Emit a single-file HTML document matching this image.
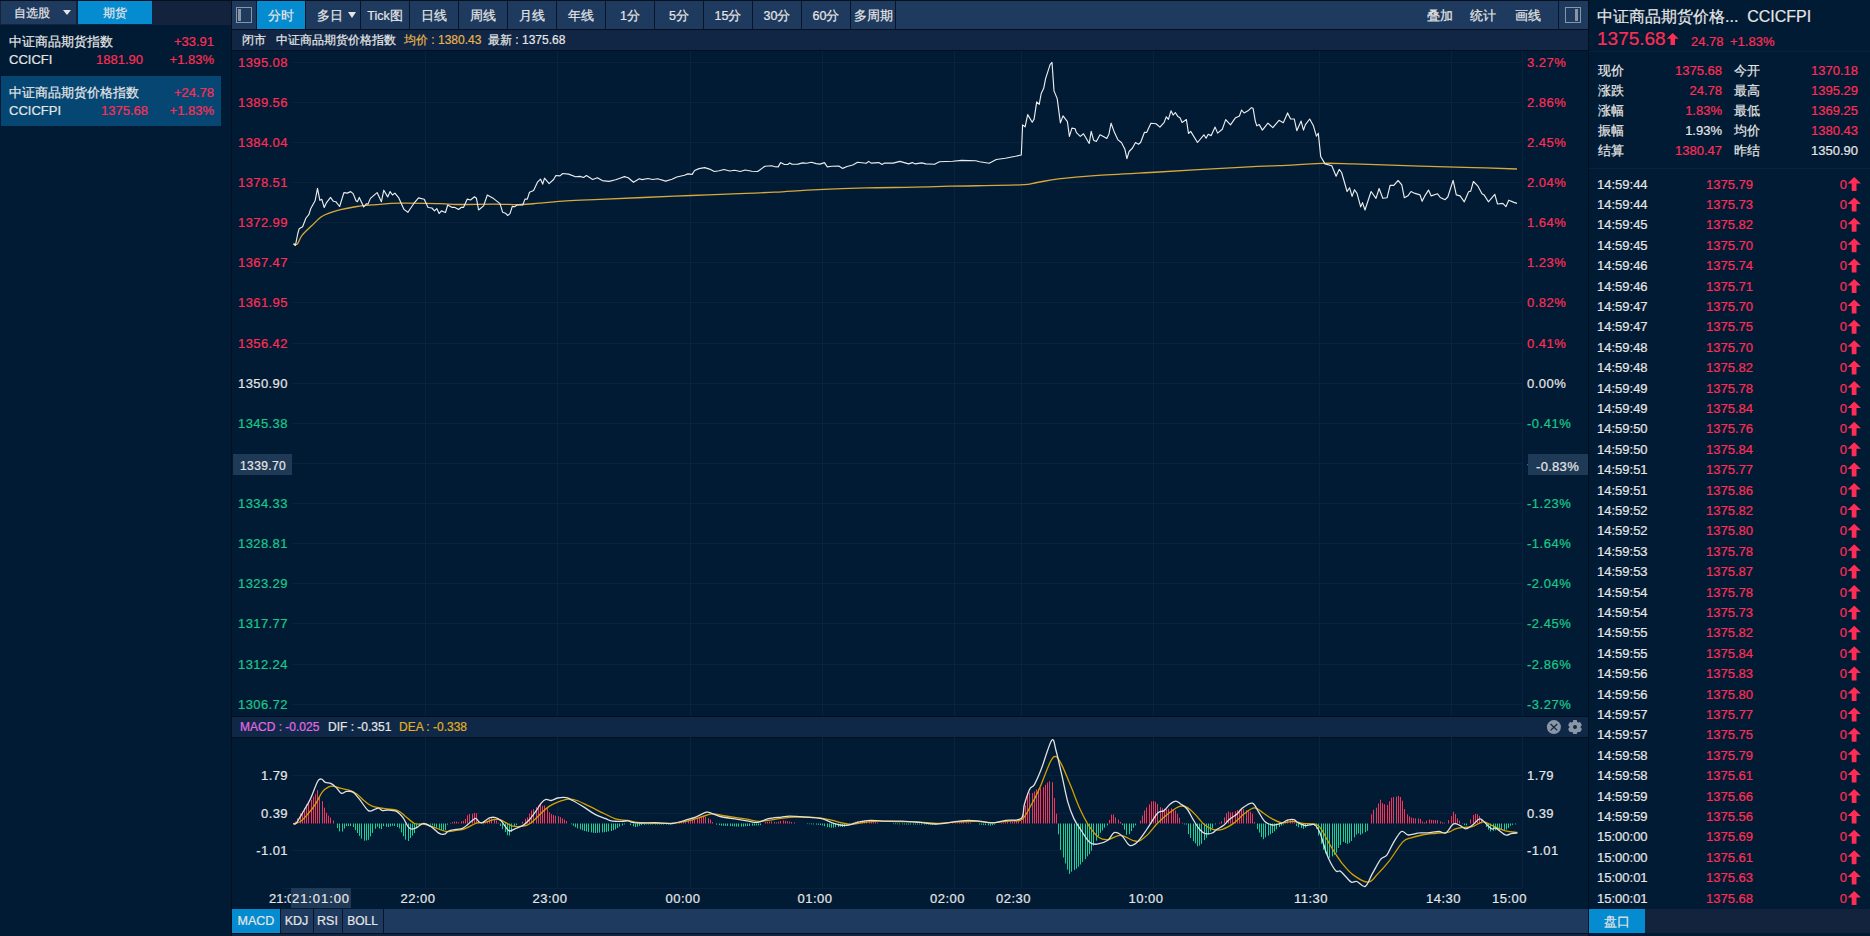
<!DOCTYPE html><html><head><meta charset="utf-8"><style>
*{margin:0;padding:0;box-sizing:border-box}
html,body{width:1870px;height:936px;overflow:hidden;background:#06101d;font-family:"Liberation Sans",sans-serif;color:#e6e6e6}
.a{position:absolute;white-space:nowrap;-webkit-text-stroke:0.2px currentColor}
.r{text-align:right}
.red{color:#ff2d55}.grn{color:#18c98a}.wht{color:#e6e6e6}
</style></head><body>
<div class="a" style="left:0px;top:1px;width:231px;height:24px;background:#13233d;"></div><div class="a" style="left:1px;top:1px;width:75px;height:23px;background:#1e3a5e;"></div><div class="a" style="left:78px;top:1px;width:74px;height:23px;background:#048bd0;"></div><div class="a" style="left:0px;top:25px;width:231px;height:911px;background:#011b34;"></div><div class="a" style="left:14px;top:6.0px;line-height:14px;font-size:12px;color:#e6e6e6;">自选股</div><div class="a" style="left:63px;top:10px;width:0;height:0;border-left:4px solid transparent;border-right:4px solid transparent;border-top:5px solid #e6e6e6"></div><div class="a" style="left:15px;width:200px;text-align:center;top:6.0px;line-height:14px;font-size:12px;color:#e6e6e6;">期货</div><div class="a" style="left:9px;top:33.5px;line-height:15px;font-size:13px;color:#e6e6e6;">中证商品期货指数</div><div class="a" style="right:1656px;top:33.5px;line-height:15px;font-size:13px;color:#ff2d55;">+33.91</div><div class="a" style="left:9px;top:51.5px;line-height:15px;font-size:13px;color:#e6e6e6;">CCICFI</div><div class="a" style="right:1727px;top:51.5px;line-height:15px;font-size:13px;color:#ff2d55;">1881.90</div><div class="a" style="right:1656px;top:51.5px;line-height:15px;font-size:13px;color:#ff2d55;">+1.83%</div><div class="a" style="left:1px;top:76px;width:220px;height:50px;background:#064673;"></div><div class="a" style="left:9px;top:84.5px;line-height:15px;font-size:13px;color:#e6e6e6;">中证商品期货价格指数</div><div class="a" style="right:1656px;top:84.5px;line-height:15px;font-size:13px;color:#ff2d55;">+24.78</div><div class="a" style="left:9px;top:102.5px;line-height:15px;font-size:13px;color:#e6e6e6;">CCICFPI</div><div class="a" style="right:1722px;top:102.5px;line-height:15px;font-size:13px;color:#ff2d55;">1375.68</div><div class="a" style="right:1656px;top:102.5px;line-height:15px;font-size:13px;color:#ff2d55;">+1.83%</div><div class="a" style="left:232px;top:1px;width:1356px;height:28px;background:#1e3a5e;"></div><div class="a" style="left:256px;top:1px;width:1px;height:28px;background:#07152a;"></div><div class="a" style="left:305px;top:1px;width:1px;height:28px;background:#07152a;"></div><div class="a" style="left:360px;top:1px;width:1px;height:28px;background:#07152a;"></div><div class="a" style="left:409px;top:1px;width:1px;height:28px;background:#07152a;"></div><div class="a" style="left:458px;top:1px;width:1px;height:28px;background:#07152a;"></div><div class="a" style="left:507px;top:1px;width:1px;height:28px;background:#07152a;"></div><div class="a" style="left:556px;top:1px;width:1px;height:28px;background:#07152a;"></div><div class="a" style="left:605px;top:1px;width:1px;height:28px;background:#07152a;"></div><div class="a" style="left:654px;top:1px;width:1px;height:28px;background:#07152a;"></div><div class="a" style="left:703px;top:1px;width:1px;height:28px;background:#07152a;"></div><div class="a" style="left:752px;top:1px;width:1px;height:28px;background:#07152a;"></div><div class="a" style="left:801px;top:1px;width:1px;height:28px;background:#07152a;"></div><div class="a" style="left:850px;top:1px;width:1px;height:28px;background:#07152a;"></div><div class="a" style="left:895px;top:1px;width:1px;height:28px;background:#07152a;"></div><div class="a" style="left:257px;top:1px;width:48px;height:28px;background:#048bd0;"></div><div class="a" style="left:181.0px;width:200px;text-align:center;top:8.7px;line-height:15px;font-size:12.5px;color:#e6e6e6;">分时</div><div class="a" style="left:230px;width:200px;text-align:center;top:8.7px;line-height:15px;font-size:12.5px;color:#e6e6e6;">多日</div><div class="a" style="left:348px;top:12px;width:0;height:0;border-left:4px solid transparent;border-right:4px solid transparent;border-top:6px solid #e6e6e6"></div><div class="a" style="left:285.0px;width:200px;text-align:center;top:8.7px;line-height:15px;font-size:12.5px;color:#e6e6e6;">Tick图</div><div class="a" style="left:334.0px;width:200px;text-align:center;top:8.7px;line-height:15px;font-size:12.5px;color:#e6e6e6;">日线</div><div class="a" style="left:383.0px;width:200px;text-align:center;top:8.7px;line-height:15px;font-size:12.5px;color:#e6e6e6;">周线</div><div class="a" style="left:432.0px;width:200px;text-align:center;top:8.7px;line-height:15px;font-size:12.5px;color:#e6e6e6;">月线</div><div class="a" style="left:481.0px;width:200px;text-align:center;top:8.7px;line-height:15px;font-size:12.5px;color:#e6e6e6;">年线</div><div class="a" style="left:530.0px;width:200px;text-align:center;top:8.7px;line-height:15px;font-size:12.5px;color:#e6e6e6;">1分</div><div class="a" style="left:579.0px;width:200px;text-align:center;top:8.7px;line-height:15px;font-size:12.5px;color:#e6e6e6;">5分</div><div class="a" style="left:628.0px;width:200px;text-align:center;top:8.7px;line-height:15px;font-size:12.5px;color:#e6e6e6;">15分</div><div class="a" style="left:677.0px;width:200px;text-align:center;top:8.7px;line-height:15px;font-size:12.5px;color:#e6e6e6;">30分</div><div class="a" style="left:726.0px;width:200px;text-align:center;top:8.7px;line-height:15px;font-size:12.5px;color:#e6e6e6;">60分</div><div class="a" style="left:773.0px;width:200px;text-align:center;top:8.7px;line-height:15px;font-size:12.5px;color:#e6e6e6;">多周期</div><div class="a" style="left:236px;top:7px;width:16px;height:16px;border:1px solid #8a96a3"></div><div class="a" style="left:238px;top:9px;width:3px;height:12px;background:#8a96a3"></div><div class="a" style="left:1340px;width:200px;text-align:center;top:8.7px;line-height:15px;font-size:12.5px;color:#e6e6e6;">叠加</div><div class="a" style="left:1383px;width:200px;text-align:center;top:8.7px;line-height:15px;font-size:12.5px;color:#e6e6e6;">统计</div><div class="a" style="left:1428px;width:200px;text-align:center;top:8.7px;line-height:15px;font-size:12.5px;color:#e6e6e6;">画线</div><div class="a" style="left:1558px;top:1px;width:1px;height:28px;background:#07152a;"></div><div class="a" style="left:1565px;top:7px;width:16px;height:16px;border:1px solid #8a96a3"></div><div class="a" style="left:1575px;top:9px;width:3px;height:12px;background:#8a96a3"></div><div class="a" style="left:232px;top:29px;width:1356px;height:1px;background:#06101d;"></div><div class="a" style="left:232px;top:30px;width:1356px;height:20px;background:#102644;"></div><div class="a" style="left:232px;top:50px;width:1356px;height:1px;background:#06101d;"></div><div class="a" style="left:242px;top:33.0px;line-height:14px;font-size:12px;color:#e6e6e6;">闭市</div><div class="a" style="left:276px;top:33.0px;line-height:14px;font-size:12px;color:#e6e6e6;">中证商品期货价格指数</div><div class="a" style="left:404px;top:33.0px;line-height:14px;font-size:12px;color:#e6b34d;">均价 : 1380.43</div><div class="a" style="left:488px;top:33.0px;line-height:14px;font-size:12px;color:#e6e6e6;">最新 : 1375.68</div><div class="a" style="left:232px;top:51px;width:1356px;height:666px;background:#011b34;"></div><div class="a" style="left:232px;top:716px;width:1356px;height:1px;background:#06101d;"></div><div class="a" style="left:232px;top:717px;width:1356px;height:20px;background:#0f2847;"></div><div class="a" style="left:232px;top:737px;width:1356px;height:1px;background:#06101d;"></div><div class="a" style="left:232px;top:738px;width:1356px;height:171px;background:#011b34;"></div><div class="a" style="left:232px;top:909px;width:1356px;height:24px;background:#1e3a5e;"></div><div class="a" style="left:232px;top:933px;width:1356px;height:1px;background:#06101d;"></div><div class="a" style="left:232px;top:934px;width:1356px;height:2px;background:#13253f;"></div><div class="a" style="left:232px;top:909px;width:48px;height:24px;background:#048bd0;"></div><div class="a" style="left:280px;top:909px;width:1px;height:24px;background:#07152a;"></div><div class="a" style="left:313px;top:909px;width:1px;height:24px;background:#07152a;"></div><div class="a" style="left:342px;top:909px;width:1px;height:24px;background:#07152a;"></div><div class="a" style="left:383px;top:909px;width:1px;height:24px;background:#07152a;"></div><div class="a" style="left:156px;width:200px;text-align:center;top:913.5px;line-height:15px;font-size:12.5px;color:#e6e6e6;">MACD</div><div class="a" style="left:196.5px;width:200px;text-align:center;top:913.5px;line-height:15px;font-size:12.5px;color:#e6e6e6;">KDJ</div><div class="a" style="left:227.5px;width:200px;text-align:center;top:913.5px;line-height:15px;font-size:12.5px;color:#e6e6e6;">RSI</div><div class="a" style="left:262.5px;width:200px;text-align:center;top:914.0px;line-height:14px;font-size:12px;color:#e6e6e6;">BOLL</div><svg class="a" style="left:0;top:0" width="1870" height="936"><line x1="292" y1="62.5" x2="1522" y2="62.5" stroke="#0c213b" stroke-width="1"/><line x1="292" y1="102.5" x2="1522" y2="102.5" stroke="#0c213b" stroke-width="1"/><line x1="292" y1="142.5" x2="1522" y2="142.5" stroke="#0c213b" stroke-width="1"/><line x1="292" y1="182.5" x2="1522" y2="182.5" stroke="#0c213b" stroke-width="1"/><line x1="292" y1="222.5" x2="1522" y2="222.5" stroke="#0c213b" stroke-width="1"/><line x1="292" y1="262.5" x2="1522" y2="262.5" stroke="#0c213b" stroke-width="1"/><line x1="292" y1="302.5" x2="1522" y2="302.5" stroke="#0c213b" stroke-width="1"/><line x1="292" y1="343.5" x2="1522" y2="343.5" stroke="#0c213b" stroke-width="1"/><line x1="292" y1="383.5" x2="1522" y2="383.5" stroke="#0c213b" stroke-width="1"/><line x1="292" y1="423.5" x2="1522" y2="423.5" stroke="#0c213b" stroke-width="1"/><line x1="292" y1="463.5" x2="1522" y2="463.5" stroke="#0c213b" stroke-width="1"/><line x1="292" y1="503.5" x2="1522" y2="503.5" stroke="#0c213b" stroke-width="1"/><line x1="292" y1="543.5" x2="1522" y2="543.5" stroke="#0c213b" stroke-width="1"/><line x1="292" y1="583.5" x2="1522" y2="583.5" stroke="#0c213b" stroke-width="1"/><line x1="292" y1="623.5" x2="1522" y2="623.5" stroke="#0c213b" stroke-width="1"/><line x1="292" y1="664.5" x2="1522" y2="664.5" stroke="#0c213b" stroke-width="1"/><line x1="292" y1="704.5" x2="1522" y2="704.5" stroke="#0c213b" stroke-width="1"/><line x1="425.5" y1="51" x2="425.5" y2="716" stroke="#0c213b" stroke-width="1"/><line x1="425.5" y1="737" x2="425.5" y2="888" stroke="#0c213b" stroke-width="1"/><line x1="557.5" y1="51" x2="557.5" y2="716" stroke="#0c213b" stroke-width="1"/><line x1="557.5" y1="737" x2="557.5" y2="888" stroke="#0c213b" stroke-width="1"/><line x1="690.5" y1="51" x2="690.5" y2="716" stroke="#0c213b" stroke-width="1"/><line x1="690.5" y1="737" x2="690.5" y2="888" stroke="#0c213b" stroke-width="1"/><line x1="822.5" y1="51" x2="822.5" y2="716" stroke="#0c213b" stroke-width="1"/><line x1="822.5" y1="737" x2="822.5" y2="888" stroke="#0c213b" stroke-width="1"/><line x1="954.5" y1="51" x2="954.5" y2="716" stroke="#0c213b" stroke-width="1"/><line x1="954.5" y1="737" x2="954.5" y2="888" stroke="#0c213b" stroke-width="1"/><line x1="1021.5" y1="51" x2="1021.5" y2="716" stroke="#0c213b" stroke-width="1"/><line x1="1021.5" y1="737" x2="1021.5" y2="888" stroke="#0c213b" stroke-width="1"/><line x1="1153.5" y1="51" x2="1153.5" y2="716" stroke="#0c213b" stroke-width="1"/><line x1="1153.5" y1="737" x2="1153.5" y2="888" stroke="#0c213b" stroke-width="1"/><line x1="1319.5" y1="51" x2="1319.5" y2="716" stroke="#0c213b" stroke-width="1"/><line x1="1319.5" y1="737" x2="1319.5" y2="888" stroke="#0c213b" stroke-width="1"/><line x1="1451.5" y1="51" x2="1451.5" y2="716" stroke="#0c213b" stroke-width="1"/><line x1="1451.5" y1="737" x2="1451.5" y2="888" stroke="#0c213b" stroke-width="1"/><line x1="1522.5" y1="51" x2="1522.5" y2="716" stroke="#0c213b" stroke-width="1"/><line x1="1522.5" y1="737" x2="1522.5" y2="888" stroke="#0c213b" stroke-width="1"/><line x1="292" y1="775.5" x2="1522" y2="775.5" stroke="#0c213b" stroke-width="1"/><line x1="292" y1="813.5" x2="1522" y2="813.5" stroke="#0c213b" stroke-width="1"/><line x1="292" y1="850.5" x2="1522" y2="850.5" stroke="#0c213b" stroke-width="1"/><line x1="283" y1="888.5" x2="1522" y2="888.5" stroke="#0c213b" stroke-width="1"/><path d="M295.5 823.5V821.6M297.5 823.5V818.3M300.5 823.5V813.3M302.5 823.5V811.5M304.5 823.5V808.0M306.5 823.5V804.2M308.5 823.5V802.0M311.5 823.5V799.7M313.5 823.5V796.7M315.5 823.5V794.3M317.5 823.5V790.1M319.5 823.5V797.1M322.5 823.5V801.1M324.5 823.5V807.7M326.5 823.5V812.7M328.5 823.5V815.6M330.5 823.5V817.6M333.5 823.5V820.5M450.5 823.5V822.8M452.5 823.5V822.1M454.5 823.5V821.6M456.5 823.5V821.6M458.5 823.5V822.3M461.5 823.5V821.3M463.5 823.5V820.8M465.5 823.5V818.9M467.5 823.5V815.2M469.5 823.5V813.9M472.5 823.5V813.7M474.5 823.5V812.8M476.5 823.5V813.2M478.5 823.5V821.5M485.5 823.5V822.8M487.5 823.5V820.9M489.5 823.5V818.9M491.5 823.5V818.2M494.5 823.5V818.8M496.5 823.5V820.5M498.5 823.5V822.7M522.5 823.5V821.8M525.5 823.5V818.9M527.5 823.5V817.4M529.5 823.5V813.5M531.5 823.5V810.5M533.5 823.5V809.1M536.5 823.5V807.1M538.5 823.5V805.4M540.5 823.5V803.7M542.5 823.5V805.8M544.5 823.5V805.4M547.5 823.5V808.2M549.5 823.5V812.3M551.5 823.5V814.1M553.5 823.5V815.0M555.5 823.5V815.7M558.5 823.5V816.2M560.5 823.5V817.1M562.5 823.5V818.4M564.5 823.5V819.5M566.5 823.5V821.0M679.5 823.5V822.5M681.5 823.5V822.0M683.5 823.5V821.5M685.5 823.5V821.1M688.5 823.5V820.7M690.5 823.5V820.3M692.5 823.5V819.6M694.5 823.5V818.9M697.5 823.5V818.4M699.5 823.5V818.0M701.5 823.5V817.5M703.5 823.5V816.9M705.5 823.5V816.9M708.5 823.5V818.2M710.5 823.5V819.5M712.5 823.5V822.1M765.5 823.5V821.9M767.5 823.5V821.7M769.5 823.5V821.5M771.5 823.5V821.4M774.5 823.5V821.8M776.5 823.5V822.3M778.5 823.5V821.7M780.5 823.5V820.9M783.5 823.5V820.4M785.5 823.5V820.9M787.5 823.5V821.3M789.5 823.5V821.6M791.5 823.5V822.0M794.5 823.5V822.4M853.5 823.5V822.6M855.5 823.5V821.8M857.5 823.5V821.2M860.5 823.5V820.9M862.5 823.5V820.6M864.5 823.5V820.3M866.5 823.5V820.6M869.5 823.5V820.9M871.5 823.5V821.2M873.5 823.5V821.6M875.5 823.5V822.1M877.5 823.5V822.5M952.5 823.5V822.9M955.5 823.5V822.7M957.5 823.5V822.4M959.5 823.5V822.3M961.5 823.5V822.1M963.5 823.5V822.0M966.5 823.5V822.1M968.5 823.5V822.4M970.5 823.5V822.8M1001.5 823.5V822.8M1003.5 823.5V822.5M1005.5 823.5V822.2M1007.5 823.5V821.9M1010.5 823.5V821.5M1012.5 823.5V821.2M1014.5 823.5V821.1M1016.5 823.5V821.1M1018.5 823.5V821.0M1021.5 823.5V821.0M1023.5 823.5V813.7M1025.5 823.5V805.3M1027.5 823.5V793.2M1029.5 823.5V792.6M1032.5 823.5V793.1M1034.5 823.5V791.5M1036.5 823.5V789.3M1038.5 823.5V788.7M1040.5 823.5V787.9M1043.5 823.5V787.1M1045.5 823.5V784.8M1047.5 823.5V782.5M1049.5 823.5V781.2M1052.5 823.5V782.1M1054.5 823.5V798.0M1056.5 823.5V813.7M1109.5 823.5V820.0M1111.5 823.5V814.6M1113.5 823.5V814.5M1115.5 823.5V817.4M1118.5 823.5V819.6M1120.5 823.5V821.8M1140.5 823.5V820.5M1142.5 823.5V815.5M1144.5 823.5V810.4M1146.5 823.5V807.4M1149.5 823.5V804.4M1151.5 823.5V801.4M1153.5 823.5V801.0M1155.5 823.5V801.8M1157.5 823.5V803.8M1160.5 823.5V807.1M1162.5 823.5V808.3M1164.5 823.5V808.8M1166.5 823.5V809.1M1168.5 823.5V808.9M1171.5 823.5V808.4M1173.5 823.5V810.1M1175.5 823.5V810.4M1177.5 823.5V813.7M1179.5 823.5V817.8M1182.5 823.5V822.7M1219.5 823.5V822.6M1221.5 823.5V821.3M1224.5 823.5V817.4M1226.5 823.5V813.2M1228.5 823.5V811.4M1230.5 823.5V812.5M1232.5 823.5V812.2M1235.5 823.5V811.2M1237.5 823.5V810.1M1239.5 823.5V809.7M1241.5 823.5V809.4M1243.5 823.5V809.1M1246.5 823.5V810.2M1248.5 823.5V811.2M1250.5 823.5V811.7M1252.5 823.5V813.6M1254.5 823.5V822.0M1285.5 823.5V821.9M1287.5 823.5V819.7M1290.5 823.5V819.9M1292.5 823.5V820.2M1294.5 823.5V822.3M1371.5 823.5V814.3M1373.5 823.5V809.8M1376.5 823.5V807.7M1378.5 823.5V803.4M1380.5 823.5V799.7M1382.5 823.5V803.2M1384.5 823.5V804.3M1387.5 823.5V805.0M1389.5 823.5V801.4M1391.5 823.5V797.7M1393.5 823.5V797.1M1396.5 823.5V796.7M1398.5 823.5V795.9M1400.5 823.5V797.0M1402.5 823.5V800.7M1404.5 823.5V809.0M1407.5 823.5V814.3M1409.5 823.5V816.4M1411.5 823.5V817.5M1413.5 823.5V818.2M1415.5 823.5V818.3M1418.5 823.5V818.4M1420.5 823.5V818.9M1422.5 823.5V821.5M1424.5 823.5V822.4M1426.5 823.5V820.7M1429.5 823.5V819.5M1431.5 823.5V819.9M1433.5 823.5V820.0M1435.5 823.5V820.0M1437.5 823.5V820.2M1440.5 823.5V821.4M1442.5 823.5V822.3M1444.5 823.5V822.7M1448.5 823.5V820.1M1451.5 823.5V816.1M1453.5 823.5V811.7M1455.5 823.5V814.1M1457.5 823.5V818.4M1459.5 823.5V820.6M1462.5 823.5V822.9M1470.5 823.5V819.4M1473.5 823.5V815.0M1475.5 823.5V813.8M1477.5 823.5V814.1M1479.5 823.5V815.9M1481.5 823.5V819.9" stroke="#f5365c" stroke-width="1" fill="none"/><path d="M337.5 823.5V828.0M339.5 823.5V831.4M342.5 823.5V831.6M344.5 823.5V828.6M346.5 823.5V826.1M348.5 823.5V826.0M350.5 823.5V826.0M353.5 823.5V827.0M355.5 823.5V830.1M357.5 823.5V833.0M359.5 823.5V835.9M361.5 823.5V838.7M364.5 823.5V840.7M366.5 823.5V840.4M368.5 823.5V839.8M370.5 823.5V836.4M372.5 823.5V832.9M375.5 823.5V828.8M377.5 823.5V826.7M379.5 823.5V828.5M381.5 823.5V829.1M383.5 823.5V826.1M386.5 823.5V826.8M388.5 823.5V827.1M390.5 823.5V826.4M392.5 823.5V825.8M394.5 823.5V825.9M397.5 823.5V827.0M399.5 823.5V828.4M401.5 823.5V832.4M403.5 823.5V836.2M405.5 823.5V839.7M408.5 823.5V841.0M410.5 823.5V838.1M412.5 823.5V835.6M414.5 823.5V833.1M416.5 823.5V828.3M419.5 823.5V825.1M421.5 823.5V824.3M430.5 823.5V824.7M432.5 823.5V825.4M434.5 823.5V826.5M436.5 823.5V827.7M439.5 823.5V828.8M441.5 823.5V829.9M443.5 823.5V830.5M445.5 823.5V830.1M447.5 823.5V824.7M483.5 823.5V824.3M500.5 823.5V825.9M502.5 823.5V829.1M505.5 823.5V832.0M507.5 823.5V835.2M509.5 823.5V835.6M511.5 823.5V831.8M514.5 823.5V826.6M516.5 823.5V825.0M571.5 823.5V824.3M573.5 823.5V825.8M575.5 823.5V827.2M577.5 823.5V828.3M580.5 823.5V829.3M582.5 823.5V830.2M584.5 823.5V831.0M586.5 823.5V831.4M588.5 823.5V831.9M591.5 823.5V832.4M593.5 823.5V832.9M595.5 823.5V833.0M597.5 823.5V832.8M599.5 823.5V832.6M602.5 823.5V832.4M604.5 823.5V832.2M606.5 823.5V831.8M608.5 823.5V831.4M611.5 823.5V831.0M613.5 823.5V830.2M615.5 823.5V829.4M617.5 823.5V828.0M619.5 823.5V826.6M622.5 823.5V825.5M624.5 823.5V824.4M630.5 823.5V825.1M633.5 823.5V826.3M635.5 823.5V827.1M637.5 823.5V826.6M639.5 823.5V825.8M641.5 823.5V825.1M644.5 823.5V824.8M646.5 823.5V824.5M648.5 823.5V824.5M650.5 823.5V824.5M652.5 823.5V824.5M655.5 823.5V824.5M657.5 823.5V824.5M659.5 823.5V824.5M661.5 823.5V824.5M663.5 823.5V824.5M666.5 823.5V824.5M668.5 823.5V824.5M670.5 823.5V824.5M716.5 823.5V824.6M719.5 823.5V825.1M721.5 823.5V825.6M723.5 823.5V825.7M725.5 823.5V825.9M727.5 823.5V826.0M730.5 823.5V826.1M732.5 823.5V826.2M734.5 823.5V826.4M736.5 823.5V826.5M738.5 823.5V826.6M741.5 823.5V826.6M743.5 823.5V826.5M745.5 823.5V826.3M747.5 823.5V826.1M749.5 823.5V825.9M752.5 823.5V825.7M754.5 823.5V825.6M756.5 823.5V825.4M758.5 823.5V825.3M760.5 823.5V825.1M807.5 823.5V824.1M809.5 823.5V824.2M811.5 823.5V824.3M813.5 823.5V824.4M816.5 823.5V824.6M818.5 823.5V824.8M820.5 823.5V825.0M822.5 823.5V825.5M824.5 823.5V826.3M827.5 823.5V827.2M829.5 823.5V827.4M831.5 823.5V827.7M833.5 823.5V827.6M835.5 823.5V827.3M838.5 823.5V827.0M840.5 823.5V826.7M842.5 823.5V827.0M844.5 823.5V826.9M846.5 823.5V825.5M849.5 823.5V824.3M893.5 823.5V824.1M895.5 823.5V824.2M897.5 823.5V824.2M899.5 823.5V824.3M902.5 823.5V824.3M904.5 823.5V824.4M906.5 823.5V824.5M908.5 823.5V824.5M910.5 823.5V824.5M913.5 823.5V824.5M915.5 823.5V824.5M917.5 823.5V824.5M919.5 823.5V824.5M921.5 823.5V824.5M924.5 823.5V824.5M926.5 823.5V824.5M928.5 823.5V824.5M930.5 823.5V824.5M932.5 823.5V824.5M935.5 823.5V824.5M937.5 823.5V824.4M939.5 823.5V824.2M979.5 823.5V824.5M981.5 823.5V824.7M983.5 823.5V824.9M985.5 823.5V825.1M988.5 823.5V825.3M990.5 823.5V825.6M992.5 823.5V825.2M994.5 823.5V824.6M1058.5 823.5V834.3M1060.5 823.5V850.1M1063.5 823.5V857.5M1065.5 823.5V863.5M1067.5 823.5V869.6M1069.5 823.5V873.9M1071.5 823.5V871.7M1074.5 823.5V870.1M1076.5 823.5V868.7M1078.5 823.5V866.7M1080.5 823.5V864.5M1082.5 823.5V862.0M1085.5 823.5V859.2M1087.5 823.5V856.4M1089.5 823.5V854.1M1091.5 823.5V850.8M1093.5 823.5V845.6M1096.5 823.5V840.7M1098.5 823.5V836.2M1100.5 823.5V832.8M1102.5 823.5V830.3M1104.5 823.5V827.7M1107.5 823.5V825.3M1122.5 823.5V825.1M1124.5 823.5V829.7M1126.5 823.5V834.8M1129.5 823.5V834.2M1131.5 823.5V831.0M1133.5 823.5V827.7M1135.5 823.5V825.4M1184.5 823.5V824.4M1186.5 823.5V824.5M1188.5 823.5V834.2M1190.5 823.5V838.0M1193.5 823.5V841.2M1195.5 823.5V843.4M1197.5 823.5V846.3M1199.5 823.5V845.6M1201.5 823.5V843.8M1204.5 823.5V840.1M1206.5 823.5V837.8M1208.5 823.5V834.5M1210.5 823.5V831.3M1212.5 823.5V828.3M1215.5 823.5V824.4M1257.5 823.5V829.1M1259.5 823.5V832.6M1261.5 823.5V837.0M1263.5 823.5V839.2M1265.5 823.5V837.3M1268.5 823.5V835.6M1270.5 823.5V834.2M1272.5 823.5V833.0M1274.5 823.5V831.4M1276.5 823.5V829.2M1279.5 823.5V827.0M1281.5 823.5V825.6M1283.5 823.5V824.6M1296.5 823.5V826.0M1298.5 823.5V827.2M1301.5 823.5V828.0M1303.5 823.5V828.8M1305.5 823.5V827.5M1307.5 823.5V826.1M1310.5 823.5V825.4M1312.5 823.5V824.8M1314.5 823.5V826.0M1316.5 823.5V828.8M1318.5 823.5V835.5M1321.5 823.5V843.8M1323.5 823.5V849.7M1325.5 823.5V853.3M1327.5 823.5V856.0M1329.5 823.5V857.9M1332.5 823.5V856.4M1334.5 823.5V854.8M1336.5 823.5V852.7M1338.5 823.5V848.0M1340.5 823.5V844.9M1343.5 823.5V841.9M1345.5 823.5V843.0M1347.5 823.5V843.9M1349.5 823.5V842.8M1351.5 823.5V841.0M1354.5 823.5V837.3M1356.5 823.5V834.5M1358.5 823.5V833.4M1360.5 823.5V834.8M1362.5 823.5V833.6M1365.5 823.5V832.2M1367.5 823.5V830.8M1464.5 823.5V825.1M1466.5 823.5V825.3M1486.5 823.5V827.0M1488.5 823.5V829.6M1490.5 823.5V831.4M1493.5 823.5V830.8M1495.5 823.5V830.4M1497.5 823.5V830.1M1499.5 823.5V830.1M1501.5 823.5V830.1M1504.5 823.5V829.9M1506.5 823.5V829.5M1508.5 823.5V827.9M1510.5 823.5V825.7M1512.5 823.5V824.9M1515.5 823.5V824.4" stroke="#19d195" stroke-width="1" fill="none"/><path d="M293.5 243.6C294.1 243.7 295.9 245.4 297.3 244.0C298.7 242.6 299.6 238.4 302.0 235.4C304.4 232.4 308.3 229.0 311.7 225.8C315.1 222.6 318.0 218.8 322.3 216.2C326.6 213.6 331.9 212.0 337.7 210.4C343.5 208.8 350.5 207.5 356.9 206.5C363.3 205.5 369.0 205.2 376.2 204.6C383.4 204.0 389.6 203.3 400.2 203.2C410.8 203.0 430.5 203.5 440.0 203.7C449.5 203.9 448.4 204.4 457.3 204.5C466.2 204.6 483.0 204.1 493.6 204.1C504.2 204.1 513.3 204.7 520.9 204.5C528.5 204.3 531.4 203.8 539.0 203.2C546.6 202.6 556.2 201.6 566.4 200.9C576.6 200.2 587.2 199.9 600.0 199.3C612.8 198.7 627.9 198.1 643.1 197.5C658.3 196.9 675.2 196.2 691.2 195.5C707.2 194.8 725.4 194.2 739.4 193.6C753.4 193.0 761.9 192.9 775.0 192.2C788.1 191.5 802.9 190.3 818.1 189.6C833.3 188.9 850.2 188.3 866.2 187.9C882.2 187.5 900.4 187.5 914.4 187.2C928.4 186.9 932.4 186.6 950.0 186.2C967.6 185.8 1005.4 185.5 1019.9 184.9C1034.4 184.3 1030.6 183.5 1037.0 182.5C1043.4 181.5 1048.8 180.0 1058.4 178.9C1068.0 177.8 1078.0 176.8 1094.7 175.7C1111.5 174.5 1133.9 173.4 1158.9 172.0C1183.9 170.6 1222.3 168.2 1244.5 167.1C1266.7 165.9 1278.9 165.7 1291.9 165.1C1304.9 164.5 1312.4 163.5 1322.6 163.3C1332.8 163.1 1337.1 163.4 1353.3 163.9C1369.5 164.4 1400.0 165.6 1420.0 166.2C1440.0 166.8 1457.2 167.1 1473.4 167.6C1489.6 168.1 1509.7 168.8 1517.0 169.0" fill="none" stroke="#d9a83a" stroke-width="1.3" stroke-linejoin="round"/><polyline points="293.5,244.0 295.4,245.5 297.8,233.5 299.2,228.7 302.6,226.7 306.0,218.0 308.8,214.7 310.8,208.5 315.1,200.8 317.5,188.3 319.9,200.3 321.8,199.3 324.2,207.5 326.2,203.2 330.5,197.4 333.4,201.3 335.8,201.7 339.6,206.5 343.9,192.6 347.3,193.1 350.7,191.6 353.1,193.6 356.0,200.8 357.4,201.7 359.3,197.4 363.7,207.0 366.5,203.7 368.0,204.1 370.4,198.4 377.1,192.6 381.4,201.7 383.8,190.2 387.7,196.9 390.1,191.6 392.5,195.0 394.9,193.1 398.8,197.9 404.0,209.4 407.9,212.3 413.7,203.7 418.5,197.9 424.2,199.3 428.1,207.5 431.9,208.0 434.5,210.9 436.8,208.6 439.1,213.6 441.4,210.9 445.5,212.5 447.7,205.0 451.8,207.3 454.5,207.3 458.6,209.5 461.4,207.3 463.6,207.3 467.3,199.1 470.5,200.0 474.5,196.8 476.4,198.2 478.6,210.0 483.6,205.9 487.3,195.0 493.6,198.6 500.0,203.6 502.7,212.3 505.5,213.2 507.7,215.5 510.0,213.6 512.3,206.4 514.5,206.8 517.3,205.0 522.7,205.0 525.0,199.1 527.3,199.1 529.5,192.3 533.6,190.5 537.7,181.8 540.5,179.1 542.7,184.1 544.5,178.2 549.1,183.6 553.6,179.5 555.9,175.5 560.0,175.9 562.7,173.5 568.6,174.1 575.5,176.8 580.0,176.4 583.6,177.5 586.4,175.6 592.7,179.5 597.4,177.7 602.2,180.6 609.0,181.4 615.7,179.8 620.0,178.2 624.4,176.6 628.2,177.7 633.5,182.3 639.3,178.7 642.2,179.6 647.9,178.5 652.7,179.5 657.6,178.7 665.7,181.1 672.0,179.2 676.8,177.0 684.5,175.3 687.9,173.9 692.2,174.4 694.6,170.5 699.0,168.6 704.7,167.6 709.5,169.1 714.3,171.5 719.2,170.8 724.0,169.5 729.7,171.0 734.6,170.2 740.3,171.5 745.1,170.0 751.9,171.2 757.7,171.5 764.9,166.2 771.6,165.7 775.0,166.7 778.2,166.9 780.6,162.6 784.4,164.5 787.8,164.5 789.7,162.9 792.1,164.3 797.9,164.1 802.7,162.9 806.6,163.3 811.4,162.3 816.2,163.6 820.0,164.1 824.4,162.6 827.3,166.9 831.6,166.2 838.8,166.0 842.7,168.4 847.0,166.5 852.8,165.0 857.6,162.3 866.2,163.3 868.7,161.4 871.1,163.1 878.8,162.6 882.1,164.5 884.5,163.1 893.2,163.1 899.9,161.4 908.6,163.9 912.4,162.6 915.3,163.9 921.6,162.9 925.9,163.9 934.6,164.3 939.4,161.7 952.7,161.2 961.7,160.4 975.8,160.8 979.6,161.7 989.2,163.3 996.3,159.5 1005.3,158.2 1015.5,156.3 1021.3,155.0 1022.6,124.9 1025.1,126.8 1027.7,114.6 1032.2,122.3 1034.1,119.1 1036.7,101.8 1039.2,104.4 1041.2,93.5 1043.7,88.3 1045.6,78.7 1050.1,64.6 1052.0,62.4 1054.0,90.9 1057.2,98.6 1060.4,122.9 1063.0,115.9 1067.4,121.7 1069.4,136.4 1071.9,128.1 1075.1,128.7 1076.4,132.6 1080.3,136.4 1083.5,133.8 1089.2,143.5 1091.2,131.3 1093.7,140.3 1096.3,141.5 1100.0,134.8 1103.4,136.5 1106.8,138.5 1109.0,133.9 1111.1,123.2 1114.5,132.6 1118.0,139.9 1121.4,142.5 1124.8,148.9 1126.9,158.7 1129.1,151.5 1132.5,148.0 1135.5,142.5 1138.5,144.2 1140.6,142.5 1144.5,132.2 1146.6,132.5 1150.9,123.2 1156.0,123.7 1159.9,127.1 1164.2,122.4 1166.3,116.8 1168.4,119.4 1171.0,110.8 1173.1,115.1 1175.3,112.5 1177.8,116.4 1180.0,117.7 1182.1,122.4 1186.4,119.6 1188.5,133.5 1190.7,131.4 1197.5,142.5 1203.9,134.8 1206.1,138.2 1208.2,134.3 1211.2,135.6 1215.1,127.1 1217.6,133.1 1222.3,129.2 1225.7,119.6 1230.5,124.9 1235.2,118.1 1239.4,116.0 1241.6,110.0 1244.1,113.0 1248.0,110.8 1251.4,107.7 1253.1,108.3 1255.3,121.1 1256.8,125.8 1259.3,124.6 1262.4,130.1 1267.9,123.1 1272.8,127.6 1279.0,120.3 1283.3,122.7 1287.6,112.9 1290.6,119.0 1294.3,119.0 1296.8,130.7 1301.1,121.1 1303.5,130.1 1305.4,124.6 1309.7,119.0 1313.4,125.8 1316.4,136.2 1318.3,133.2 1320.7,156.5 1325.0,163.9 1331.8,165.7 1336.1,176.2 1339.2,169.4 1341.6,172.5 1347.1,191.5 1349.6,187.8 1352.1,196.4 1354.5,189.7 1357.0,193.4 1360.7,206.9 1362.5,202.6 1365.0,210.0 1371.1,191.5 1376.0,198.3 1379.1,188.5 1382.8,198.3 1387.1,197.7 1390.1,185.4 1393.8,185.4 1398.1,180.5 1401.8,184.8 1404.3,197.7 1407.9,195.8 1411.0,191.5 1415.0,193.4 1420.0,194.9 1422.1,201.3 1424.8,195.9 1428.5,190.1 1431.2,195.9 1437.6,193.8 1440.3,197.5 1445.1,199.7 1447.8,197.0 1453.1,180.4 1456.3,194.9 1460.1,195.9 1464.3,201.8 1468.6,191.7 1470.7,191.1 1473.4,181.5 1477.7,185.8 1482.0,193.8 1484.1,194.9 1488.4,201.8 1494.8,194.3 1497.5,204.0 1502.8,203.4 1506.0,206.6 1508.7,200.2 1514.0,202.4 1517.0,203.4" fill="none" stroke="#ececec" stroke-width="1.15" stroke-linejoin="round"/><path d="M293.3 823.7C294.5 823.3 297.9 823.1 300.4 821.5C302.9 819.9 305.5 816.8 308.1 813.8C310.7 810.8 313.5 807.2 315.8 803.6C318.1 800.0 320.1 794.9 322.2 792.1C324.3 789.3 326.7 787.9 328.6 786.9C330.5 785.9 331.8 786.1 333.7 786.3C335.6 786.5 337.5 787.6 340.1 788.2C342.7 788.8 346.3 789.1 349.1 790.1C351.9 791.1 354.2 792.2 356.8 794.0C359.4 795.8 361.9 799.0 364.5 801.0C367.1 803.0 368.8 804.9 372.2 806.2C375.6 807.5 380.7 808.0 385.0 808.7C389.3 809.4 394.4 809.3 397.8 810.6C401.2 811.9 402.7 814.2 405.5 816.4C408.3 818.5 411.5 822.2 414.5 823.5C417.5 824.8 420.5 823.6 423.5 824.1C426.5 824.6 428.6 825.5 432.4 826.7C436.2 827.9 442.5 830.9 446.4 831.5C450.3 832.1 453.0 830.9 456.0 830.4C459.0 829.9 461.9 829.7 464.6 828.8C467.3 827.9 470.0 826.1 472.1 825.1C474.2 824.1 475.3 823.4 477.4 822.9C479.5 822.4 482.2 822.9 484.9 822.4C487.6 821.9 491.0 820.2 493.5 819.7C496.0 819.2 497.8 819.2 499.9 819.7C502.0 820.2 504.2 821.8 506.3 822.9C508.4 824.0 509.9 825.6 512.7 826.1C515.6 826.6 520.4 826.6 523.4 826.1C526.4 825.6 527.9 825.1 530.9 822.9C533.9 820.7 538.6 815.5 541.6 812.8C544.6 810.0 546.4 808.2 549.1 806.4C551.8 804.6 554.4 803.3 557.6 802.1C560.8 800.9 565.1 799.4 568.3 799.1C571.5 798.8 573.3 799.3 576.9 800.5C580.5 801.7 585.4 804.4 589.7 806.4C594.0 808.4 598.1 810.7 602.6 812.8C607.1 814.9 612.4 818.0 616.5 819.2C620.6 820.5 623.3 819.7 627.2 820.3C631.1 820.9 632.5 822.1 640.0 822.6C647.5 823.1 664.1 823.6 672.1 823.3C680.1 823.0 682.8 822.0 688.1 820.8C693.5 819.6 700.1 817.1 704.2 816.0C708.3 814.9 709.1 813.9 712.7 813.9C716.3 813.9 719.9 815.1 725.6 816.0C731.3 816.9 741.3 818.3 747.0 819.2C752.7 820.1 754.5 821.4 759.8 821.3C765.1 821.2 773.1 819.4 779.0 818.7C784.9 818.0 788.9 817.3 795.1 817.1C801.4 816.9 810.3 817.1 816.5 817.6C822.7 818.1 828.6 819.5 832.5 820.3C836.4 821.1 837.0 821.7 840.0 822.4C843.0 823.1 847.1 824.4 850.7 824.5C854.3 824.6 857.0 823.5 861.4 822.9C865.8 822.3 871.2 821.3 877.4 821.1C883.6 820.9 892.5 821.5 898.8 821.6C905.0 821.7 908.6 821.6 914.9 821.9C921.1 822.2 929.2 823.3 936.3 823.3C943.4 823.3 950.8 822.2 957.6 821.9C964.4 821.6 971.2 821.2 976.9 821.3C982.6 821.4 986.2 822.7 991.9 822.6C997.6 822.5 1006.1 821.3 1011.1 820.8C1016.1 820.3 1018.8 821.8 1022.0 819.4C1025.2 817.0 1027.5 811.6 1030.5 806.3C1033.5 801.0 1036.5 795.2 1039.8 787.7C1043.1 780.2 1047.9 766.5 1050.6 761.3C1053.3 756.1 1054.2 756.2 1056.0 756.7C1057.8 757.2 1059.0 759.5 1061.5 764.4C1064.0 769.3 1067.7 778.6 1070.8 786.1C1073.9 793.6 1077.0 802.6 1080.1 809.3C1083.2 816.0 1086.2 821.8 1089.3 826.4C1092.4 831.0 1095.5 835.0 1098.6 837.2C1101.7 839.4 1104.3 839.9 1107.9 839.6C1111.5 839.3 1116.2 835.3 1120.3 835.4C1124.4 835.5 1129.6 839.3 1132.7 840.3C1135.8 841.2 1136.3 842.1 1138.9 841.1C1141.5 840.1 1145.1 837.1 1148.2 834.1C1151.3 831.1 1153.9 826.9 1157.5 823.3C1161.1 819.6 1166.3 815.0 1170.0 812.2C1173.7 809.4 1176.8 807.1 1179.6 806.3C1182.4 805.5 1184.4 806.0 1187.1 807.4C1189.8 808.8 1192.8 812.0 1195.6 814.9C1198.4 817.8 1201.3 822.1 1204.2 824.5C1207.1 826.9 1209.7 828.5 1212.7 829.3C1215.7 830.1 1218.8 830.4 1222.4 829.3C1226.0 828.2 1230.4 825.6 1234.1 822.9C1237.8 820.2 1241.4 815.8 1244.8 813.3C1248.2 810.8 1251.4 808.0 1254.4 807.9C1257.4 807.8 1259.9 810.8 1262.9 812.7C1265.9 814.6 1269.4 817.4 1272.6 819.1C1275.8 820.8 1278.8 822.5 1282.2 822.9C1285.6 823.3 1289.4 821.2 1292.9 821.3C1296.5 821.4 1299.6 822.9 1303.5 823.4C1307.4 823.9 1313.4 823.4 1316.4 824.5C1319.4 825.6 1320.3 827.9 1321.7 829.8C1323.1 831.7 1323.6 833.2 1325.0 835.7C1326.4 838.2 1328.6 842.4 1330.0 844.8C1331.4 847.2 1331.3 847.3 1333.3 850.3C1335.2 853.3 1338.5 858.8 1341.7 862.8C1345.0 866.8 1348.4 871.4 1352.8 874.6C1357.2 877.8 1363.9 882.3 1368.1 882.2C1372.3 882.1 1374.3 877.4 1377.8 873.9C1381.3 870.4 1384.7 866.7 1388.9 861.4C1393.1 856.1 1399.1 845.8 1402.8 841.9C1406.5 838.0 1407.9 838.9 1411.1 837.8C1414.3 836.6 1418.0 835.8 1422.2 835.0C1426.4 834.2 1431.7 833.8 1436.1 833.3C1440.5 832.8 1445.3 833.0 1448.6 832.2C1451.8 831.5 1453.0 829.6 1455.6 828.8C1458.1 828.0 1461.1 827.8 1463.9 827.4C1466.7 827.0 1469.0 827.6 1472.2 826.7C1475.4 825.8 1480.0 822.0 1483.3 821.8C1486.5 821.6 1488.0 823.8 1491.7 825.3C1495.4 826.8 1501.3 829.6 1505.6 830.8C1509.9 832.0 1515.4 832.2 1517.4 832.5" fill="none" stroke="#d4a000" stroke-width="1.3" stroke-linejoin="round"/><path d="M293.3 823.7C293.8 823.6 294.7 825.1 296.5 822.8C298.3 820.5 301.8 814.0 304.2 810.0C306.6 806.0 308.4 803.3 310.6 798.5C312.9 793.7 315.9 784.4 317.7 781.2C319.5 778.0 320.2 779.0 321.5 779.2C322.8 779.4 323.8 781.6 325.4 782.4C327.0 783.1 329.4 782.8 331.2 783.7C333.0 784.6 334.6 786.0 336.3 787.6C338.0 789.2 339.7 792.7 341.4 793.3C343.1 793.9 344.6 791.6 346.5 791.4C348.4 791.2 350.9 790.8 353.0 792.1C355.1 793.4 356.8 796.0 359.4 799.1C361.9 802.2 365.8 808.9 368.3 810.6C370.9 812.3 373.0 809.8 374.7 809.4C376.4 809.0 377.3 807.9 378.6 808.1C379.9 808.3 380.9 810.3 382.4 810.6C383.9 810.9 385.2 809.9 387.6 810.0C390.0 810.1 393.9 810.0 396.5 811.3C399.1 812.6 401.1 815.1 403.0 817.7C404.9 820.3 406.6 824.8 408.1 826.7C409.6 828.6 410.4 829.1 411.9 829.2C413.4 829.3 415.2 828.2 417.1 827.3C419.0 826.3 421.1 823.6 423.5 823.5C425.9 823.4 428.6 825.1 431.2 826.7C433.8 828.3 436.6 831.9 438.8 833.1C441.0 834.4 442.7 834.6 444.3 834.2C445.9 833.9 446.7 831.8 448.6 831.0C450.6 830.2 453.7 829.9 456.0 829.4C458.3 828.9 460.5 829.1 462.5 828.3C464.5 827.5 466.2 825.8 467.8 824.5C469.4 823.2 470.8 821.8 472.1 820.8C473.4 819.8 474.7 818.1 475.8 818.3C476.9 818.5 478.0 821.1 479.0 821.9C480.0 822.7 480.5 823.2 481.7 822.9C482.9 822.6 484.6 821.2 486.0 820.3C487.4 819.4 488.7 818.0 490.3 817.6C491.9 817.2 493.8 817.1 495.6 817.6C497.4 818.1 499.2 819.1 501.0 820.8C502.8 822.5 504.9 826.1 506.3 827.8C507.7 829.5 508.1 830.8 509.5 831.0C510.9 831.2 512.6 829.8 514.9 828.8C517.2 827.8 520.9 826.7 523.4 825.1C525.9 823.5 527.6 821.6 529.8 819.2C531.9 816.8 534.3 813.4 536.3 810.6C538.3 807.8 540.0 804.5 541.6 802.6C543.2 800.7 544.3 799.8 545.9 799.4C547.5 799.0 549.2 800.7 551.2 800.5C553.2 800.3 555.1 798.5 557.6 798.0C560.1 797.5 563.7 797.2 566.2 797.6C568.7 798.0 569.6 798.9 572.6 800.5C575.6 802.1 580.6 805.1 584.4 807.4C588.1 809.7 591.5 812.5 595.1 814.4C598.7 816.3 603.1 817.6 605.8 818.7C608.5 819.8 608.4 820.4 611.1 820.8C613.8 821.2 618.9 821.3 621.8 821.3C624.6 821.3 626.4 820.6 628.2 820.8C630.0 821.0 630.5 822.0 632.5 822.4C634.5 822.8 636.1 823.0 640.0 823.0C643.9 823.0 650.6 822.5 656.0 822.6C661.4 822.7 667.3 823.9 672.1 823.5C676.9 823.1 681.0 821.4 684.9 820.3C688.8 819.2 692.0 818.5 695.6 817.1C699.2 815.8 703.6 812.8 706.3 812.2C709.0 811.6 709.4 812.6 711.7 813.3C714.0 814.0 716.1 815.5 720.2 816.5C724.3 817.5 731.8 818.5 736.3 819.2C740.8 819.9 743.5 820.3 747.0 820.8C750.5 821.3 754.1 822.8 757.6 822.4C761.1 822.0 764.4 819.6 768.3 818.7C772.2 817.8 777.6 817.5 781.2 817.1C784.8 816.7 785.6 816.2 789.7 816.2C793.8 816.2 800.4 816.7 805.8 817.1C811.1 817.5 817.3 817.7 821.8 818.7C826.2 819.7 829.5 821.9 832.5 822.9C835.5 823.9 837.3 824.6 840.0 825.0C842.7 825.4 845.4 825.6 848.6 825.1C851.8 824.6 855.7 822.7 859.3 821.9C862.9 821.1 866.1 820.4 870.0 820.3C873.9 820.2 877.5 821.0 882.8 821.1C888.1 821.2 895.8 820.9 902.0 821.1C908.2 821.3 914.5 821.9 920.2 822.4C925.9 822.9 930.1 824.2 936.3 824.0C942.5 823.8 952.3 821.9 957.6 821.3C962.9 820.7 964.7 820.3 968.3 820.3C971.9 820.3 975.1 820.7 979.0 821.1C982.9 821.5 987.4 823.0 991.9 822.9C996.4 822.8 1000.9 821.0 1005.8 820.3C1010.7 819.6 1018.1 821.2 1021.2 818.6C1024.3 816.0 1022.9 809.6 1024.3 804.7C1025.7 799.8 1028.0 792.6 1029.7 789.2C1031.4 785.9 1032.5 788.0 1034.4 784.6C1036.3 781.2 1038.4 776.5 1041.3 769.1C1044.2 761.7 1049.2 743.5 1051.7 740.4C1054.2 737.3 1054.4 745.0 1056.0 750.5C1057.6 756.0 1059.5 765.2 1061.5 773.7C1063.5 782.2 1065.6 794.1 1067.7 801.6C1069.8 809.1 1071.6 813.7 1073.9 818.6C1076.2 823.5 1079.0 827.1 1081.6 831.0C1084.2 834.9 1086.7 839.7 1089.3 841.9C1091.9 844.1 1094.0 844.5 1097.1 844.2C1100.2 843.9 1105.1 842.2 1107.9 840.3C1110.7 838.4 1111.8 833.4 1114.1 832.6C1116.4 831.8 1119.3 833.6 1121.9 835.7C1124.5 837.8 1127.0 844.3 1129.6 845.3C1132.2 846.3 1134.6 844.5 1137.4 841.9C1140.2 839.3 1143.4 834.3 1146.7 829.5C1150.0 824.7 1154.7 816.3 1157.5 813.2C1160.3 810.1 1161.6 812.4 1163.7 810.9C1165.8 809.4 1168.0 805.8 1170.0 804.2C1172.0 802.6 1174.1 801.2 1175.9 801.2C1177.7 801.2 1178.8 802.7 1180.7 804.0C1182.6 805.3 1185.0 806.3 1187.1 809.0C1189.2 811.7 1191.4 816.7 1193.5 820.2C1195.6 823.7 1197.9 827.6 1199.9 829.8C1201.9 832.0 1203.2 833.1 1205.3 833.6C1207.3 834.1 1210.2 833.7 1212.2 833.0C1214.2 832.3 1215.1 830.5 1217.0 829.3C1218.9 828.1 1221.3 827.3 1223.4 825.6C1225.5 823.9 1227.5 821.1 1229.8 819.1C1232.1 817.1 1235.2 815.7 1237.3 813.8C1239.4 811.9 1240.1 809.7 1242.6 807.9C1245.1 806.1 1249.6 802.4 1252.3 803.1C1255.0 803.8 1256.6 809.1 1258.7 812.2C1260.8 815.3 1262.8 819.7 1265.1 821.8C1267.4 823.9 1269.9 824.7 1272.6 825.0C1275.3 825.3 1278.6 824.2 1281.1 823.4C1283.6 822.6 1285.4 820.8 1287.5 820.2C1289.6 819.6 1292.1 819.2 1293.9 819.7C1295.7 820.2 1296.2 821.9 1298.2 822.9C1300.2 823.9 1303.0 825.3 1305.7 825.6C1308.4 825.9 1311.9 823.4 1314.2 824.5C1316.5 825.6 1318.0 828.6 1319.6 832.0C1321.2 835.4 1322.7 841.5 1323.8 844.8C1324.9 848.1 1324.9 849.0 1326.0 852.0C1327.1 855.0 1328.9 859.6 1330.6 862.8C1332.3 866.0 1334.5 869.7 1336.1 871.1C1337.7 872.5 1338.7 870.2 1340.3 871.1C1341.9 872.0 1343.9 874.9 1345.8 876.7C1347.7 878.6 1349.6 881.4 1351.4 882.2C1353.2 883.0 1354.6 880.8 1356.9 881.5C1359.2 882.2 1362.8 887.7 1365.3 886.4C1367.8 885.1 1369.7 878.4 1372.2 873.9C1374.8 869.4 1378.2 862.4 1380.6 859.3C1383.0 856.2 1384.7 857.8 1386.8 855.1C1388.9 852.4 1390.7 847.2 1393.1 843.3C1395.5 839.4 1398.9 832.9 1401.4 831.5C1403.9 830.1 1405.3 834.8 1408.3 835.0C1411.3 835.2 1416.2 833.2 1419.4 832.9C1422.7 832.5 1424.5 833.1 1427.8 832.9C1431.0 832.7 1435.9 831.5 1438.9 831.5C1441.9 831.5 1443.4 834.2 1445.8 832.9C1448.2 831.6 1451.2 825.2 1453.5 823.9C1455.8 822.6 1457.6 824.5 1459.7 825.3C1461.8 826.1 1463.9 828.8 1466.0 828.8C1468.1 828.8 1470.0 826.9 1472.2 825.3C1474.4 823.7 1477.4 819.7 1479.2 819.0C1481.0 818.3 1481.2 819.5 1483.3 821.1C1485.4 822.7 1489.6 827.6 1491.7 828.8C1493.8 830.0 1493.5 827.1 1495.8 828.1C1498.1 829.1 1503.0 834.1 1505.6 835.0C1508.1 835.9 1509.1 834.0 1511.1 833.6C1513.1 833.2 1516.4 833.0 1517.4 832.9" fill="none" stroke="#e0e0e0" stroke-width="1.3" stroke-linejoin="round"/></svg><div class="a" style="left:238px;top:55.1px;line-height:15px;font-size:13px;color:#ff2d55;letter-spacing:0.4px">1395.08</div><div class="a" style="left:1527px;top:55.1px;line-height:15px;font-size:13px;color:#ff2d55;letter-spacing:0.5px">3.27%</div><div class="a" style="left:238px;top:95.1px;line-height:15px;font-size:13px;color:#ff2d55;letter-spacing:0.4px">1389.56</div><div class="a" style="left:1527px;top:95.1px;line-height:15px;font-size:13px;color:#ff2d55;letter-spacing:0.5px">2.86%</div><div class="a" style="left:238px;top:135.1px;line-height:15px;font-size:13px;color:#ff2d55;letter-spacing:0.4px">1384.04</div><div class="a" style="left:1527px;top:135.1px;line-height:15px;font-size:13px;color:#ff2d55;letter-spacing:0.5px">2.45%</div><div class="a" style="left:238px;top:175.1px;line-height:15px;font-size:13px;color:#ff2d55;letter-spacing:0.4px">1378.51</div><div class="a" style="left:1527px;top:175.1px;line-height:15px;font-size:13px;color:#ff2d55;letter-spacing:0.5px">2.04%</div><div class="a" style="left:238px;top:215.1px;line-height:15px;font-size:13px;color:#ff2d55;letter-spacing:0.4px">1372.99</div><div class="a" style="left:1527px;top:215.1px;line-height:15px;font-size:13px;color:#ff2d55;letter-spacing:0.5px">1.64%</div><div class="a" style="left:238px;top:255.1px;line-height:15px;font-size:13px;color:#ff2d55;letter-spacing:0.4px">1367.47</div><div class="a" style="left:1527px;top:255.1px;line-height:15px;font-size:13px;color:#ff2d55;letter-spacing:0.5px">1.23%</div><div class="a" style="left:238px;top:295.1px;line-height:15px;font-size:13px;color:#ff2d55;letter-spacing:0.4px">1361.95</div><div class="a" style="left:1527px;top:295.1px;line-height:15px;font-size:13px;color:#ff2d55;letter-spacing:0.5px">0.82%</div><div class="a" style="left:238px;top:336.1px;line-height:15px;font-size:13px;color:#ff2d55;letter-spacing:0.4px">1356.42</div><div class="a" style="left:1527px;top:336.1px;line-height:15px;font-size:13px;color:#ff2d55;letter-spacing:0.5px">0.41%</div><div class="a" style="left:238px;top:376.1px;line-height:15px;font-size:13px;color:#e6e6e6;letter-spacing:0.4px">1350.90</div><div class="a" style="left:1527px;top:376.1px;line-height:15px;font-size:13px;color:#e6e6e6;letter-spacing:0.5px">0.00%</div><div class="a" style="left:238px;top:416.1px;line-height:15px;font-size:13px;color:#18c98a;letter-spacing:0.4px">1345.38</div><div class="a" style="left:1527px;top:416.1px;line-height:15px;font-size:13px;color:#18c98a;letter-spacing:0.5px">-0.41%</div><div class="a" style="left:1527px;top:456.1px;line-height:15px;font-size:13px;color:#18c98a;letter-spacing:0.5px">-0.82%</div><div class="a" style="left:238px;top:496.1px;line-height:15px;font-size:13px;color:#18c98a;letter-spacing:0.4px">1334.33</div><div class="a" style="left:1527px;top:496.1px;line-height:15px;font-size:13px;color:#18c98a;letter-spacing:0.5px">-1.23%</div><div class="a" style="left:238px;top:536.1px;line-height:15px;font-size:13px;color:#18c98a;letter-spacing:0.4px">1328.81</div><div class="a" style="left:1527px;top:536.1px;line-height:15px;font-size:13px;color:#18c98a;letter-spacing:0.5px">-1.64%</div><div class="a" style="left:238px;top:576.1px;line-height:15px;font-size:13px;color:#18c98a;letter-spacing:0.4px">1323.29</div><div class="a" style="left:1527px;top:576.1px;line-height:15px;font-size:13px;color:#18c98a;letter-spacing:0.5px">-2.04%</div><div class="a" style="left:238px;top:616.1px;line-height:15px;font-size:13px;color:#18c98a;letter-spacing:0.4px">1317.77</div><div class="a" style="left:1527px;top:616.1px;line-height:15px;font-size:13px;color:#18c98a;letter-spacing:0.5px">-2.45%</div><div class="a" style="left:238px;top:657.1px;line-height:15px;font-size:13px;color:#18c98a;letter-spacing:0.4px">1312.24</div><div class="a" style="left:1527px;top:657.1px;line-height:15px;font-size:13px;color:#18c98a;letter-spacing:0.5px">-2.86%</div><div class="a" style="left:238px;top:697.1px;line-height:15px;font-size:13px;color:#18c98a;letter-spacing:0.4px">1306.72</div><div class="a" style="left:1527px;top:697.1px;line-height:15px;font-size:13px;color:#18c98a;letter-spacing:0.5px">-3.27%</div><div class="a" style="left:233px;top:454px;width:59px;height:21px;background:#1f3a56;"></div><div class="a" style="left:240px;top:459.0px;line-height:14px;font-size:12px;color:#e6e6e6;letter-spacing:0.4px">1339.70</div><div class="a" style="left:1528px;top:454px;width:60px;height:21px;background:#1f3a56;"></div><div class="a" style="left:1536px;top:458.5px;line-height:15px;font-size:13px;color:#e6e6e6;letter-spacing:0.3px">-0.83%</div><div class="a" style="left:240px;top:720.0px;line-height:14px;font-size:12px;color:#e46ae6;">MACD : -0.025</div><div class="a" style="left:328px;top:720.0px;line-height:14px;font-size:12px;color:#e6e6e6;">DIF : -0.351</div><div class="a" style="left:399px;top:720.0px;line-height:14px;font-size:12px;color:#e0b020;">DEA : -0.338</div><svg class="a" style="left:1540px;top:717px" width="48" height="20" viewBox="0 0 48 20"><g transform="translate(13.9 10.1)"><circle r="7" fill="#8a96a6"/><path d="M-3.3 -3.1L3.3 3.3M3.3 -3.1L-3.3 3.3" stroke="#0f2846" stroke-width="1.3"/></g><g transform="translate(35 10.1)" fill="#8a96a6"><circle r="5.7"/><rect x="-2.1" y="-7" width="4.2" height="3" rx="1" transform="rotate(0)"/><rect x="-2.1" y="-7" width="4.2" height="3" rx="1" transform="rotate(60)"/><rect x="-2.1" y="-7" width="4.2" height="3" rx="1" transform="rotate(120)"/><rect x="-2.1" y="-7" width="4.2" height="3" rx="1" transform="rotate(180)"/><rect x="-2.1" y="-7" width="4.2" height="3" rx="1" transform="rotate(240)"/><rect x="-2.1" y="-7" width="4.2" height="3" rx="1" transform="rotate(300)"/><circle r="2" fill="#0f2846"/></g></svg><div class="a" style="right:1582px;top:768.3px;line-height:15px;font-size:13px;color:#e6e6e6;letter-spacing:0.4px">1.79</div><div class="a" style="left:1527px;top:768.3px;line-height:15px;font-size:13px;color:#e6e6e6;letter-spacing:0.4px">1.79</div><div class="a" style="right:1582px;top:806.0px;line-height:15px;font-size:13px;color:#e6e6e6;letter-spacing:0.4px">0.39</div><div class="a" style="left:1527px;top:806.0px;line-height:15px;font-size:13px;color:#e6e6e6;letter-spacing:0.4px">0.39</div><div class="a" style="right:1582px;top:843.3px;line-height:15px;font-size:13px;color:#e6e6e6;letter-spacing:0.4px">-1.01</div><div class="a" style="left:1527px;top:843.3px;line-height:15px;font-size:13px;color:#e6e6e6;letter-spacing:0.4px">-1.01</div><div class="a" style="left:318px;width:200px;text-align:center;top:891.0px;line-height:15px;font-size:13px;color:#e6e6e6;letter-spacing:0.5px">22:00</div><div class="a" style="left:450px;width:200px;text-align:center;top:891.0px;line-height:15px;font-size:13px;color:#e6e6e6;letter-spacing:0.5px">23:00</div><div class="a" style="left:583px;width:200px;text-align:center;top:891.0px;line-height:15px;font-size:13px;color:#e6e6e6;letter-spacing:0.5px">00:00</div><div class="a" style="left:715px;width:200px;text-align:center;top:891.0px;line-height:15px;font-size:13px;color:#e6e6e6;letter-spacing:0.5px">01:00</div><div class="a" style="left:847.5px;width:200px;text-align:center;top:891.0px;line-height:15px;font-size:13px;color:#e6e6e6;letter-spacing:0.5px">02:00</div><div class="a" style="left:913.5px;width:200px;text-align:center;top:891.0px;line-height:15px;font-size:13px;color:#e6e6e6;letter-spacing:0.5px">02:30</div><div class="a" style="left:1046px;width:200px;text-align:center;top:891.0px;line-height:15px;font-size:13px;color:#e6e6e6;letter-spacing:0.5px">10:00</div><div class="a" style="left:1211px;width:200px;text-align:center;top:891.0px;line-height:15px;font-size:13px;color:#e6e6e6;letter-spacing:0.5px">11:30</div><div class="a" style="left:1343.5px;width:200px;text-align:center;top:891.0px;line-height:15px;font-size:13px;color:#e6e6e6;letter-spacing:0.5px">14:30</div><div class="a" style="left:1409.5px;width:200px;text-align:center;top:891.0px;line-height:15px;font-size:13px;color:#e6e6e6;letter-spacing:0.5px">15:00</div><div class="a" style="left:269px;top:891.0px;line-height:15px;font-size:13px;color:#e6e6e6;">21:00</div><div class="a" style="left:291px;top:888px;width:60px;height:20px;background:#1f3a56;"></div><div class="a" style="left:221px;width:200px;text-align:center;top:891.0px;line-height:15px;font-size:13px;color:#e6e6e6;letter-spacing:0.9px">21:01:00</div><div class="a" style="left:1589px;top:0px;width:281px;height:936px;background:#011b34;"></div><div class="a" style="left:1588px;top:0px;width:1px;height:936px;background:#06101d;"></div><div class="a" style="left:1597px;top:6.5px;line-height:19px;font-size:16px;color:#e6e6e6;">中证商品期货价格... &nbsp;CCICFPI</div><div class="a" style="left:1597px;top:28.0px;line-height:22px;font-size:19px;color:#ff2d55;">1375.68</div><div class="a" style="left:1691px;top:33.5px;line-height:15px;font-size:13px;color:#ff2d55;">24.78</div><div class="a" style="left:1730px;top:33.5px;line-height:15px;font-size:13px;color:#ff2d55;">+1.83%</div><div class="a" style="left:1589px;top:51px;width:281px;height:1px;background:#0c2238;"></div><div class="a" style="left:1598px;top:62.5px;line-height:15px;font-size:13px;color:#e6e6e6;">现价</div><div class="a" style="right:148px;top:62.5px;line-height:15px;font-size:13px;color:#ff2d55;">1375.68</div><div class="a" style="left:1734px;top:62.5px;line-height:15px;font-size:13px;color:#e6e6e6;">今开</div><div class="a" style="right:12px;top:62.5px;line-height:15px;font-size:13px;color:#ff2d55;">1370.18</div><div class="a" style="left:1598px;top:82.5px;line-height:15px;font-size:13px;color:#e6e6e6;">涨跌</div><div class="a" style="right:148px;top:82.5px;line-height:15px;font-size:13px;color:#ff2d55;">24.78</div><div class="a" style="left:1734px;top:82.5px;line-height:15px;font-size:13px;color:#e6e6e6;">最高</div><div class="a" style="right:12px;top:82.5px;line-height:15px;font-size:13px;color:#ff2d55;">1395.29</div><div class="a" style="left:1598px;top:102.5px;line-height:15px;font-size:13px;color:#e6e6e6;">涨幅</div><div class="a" style="right:148px;top:102.5px;line-height:15px;font-size:13px;color:#ff2d55;">1.83%</div><div class="a" style="left:1734px;top:102.5px;line-height:15px;font-size:13px;color:#e6e6e6;">最低</div><div class="a" style="right:12px;top:102.5px;line-height:15px;font-size:13px;color:#ff2d55;">1369.25</div><div class="a" style="left:1598px;top:122.5px;line-height:15px;font-size:13px;color:#e6e6e6;">振幅</div><div class="a" style="right:148px;top:122.5px;line-height:15px;font-size:13px;color:#e6e6e6;">1.93%</div><div class="a" style="left:1734px;top:122.5px;line-height:15px;font-size:13px;color:#e6e6e6;">均价</div><div class="a" style="right:12px;top:122.5px;line-height:15px;font-size:13px;color:#ff2d55;">1380.43</div><div class="a" style="left:1598px;top:142.5px;line-height:15px;font-size:13px;color:#e6e6e6;">结算</div><div class="a" style="right:148px;top:142.5px;line-height:15px;font-size:13px;color:#ff2d55;">1380.47</div><div class="a" style="left:1734px;top:142.5px;line-height:15px;font-size:13px;color:#e6e6e6;">昨结</div><div class="a" style="right:12px;top:142.5px;line-height:15px;font-size:13px;color:#e6e6e6;">1350.90</div><div class="a" style="left:1589px;top:168px;width:281px;height:1px;background:#0c2238;"></div><div class="a" style="left:1597px;top:176.5px;line-height:15px;font-size:13px;color:#e6e6e6;">14:59:44</div><div class="a" style="left:1706px;top:176.5px;line-height:15px;font-size:13px;color:#ff2d55;">1375.79</div><div class="a" style="right:23px;top:176.5px;line-height:15px;font-size:13px;color:#ff2d55;">0</div><div class="a" style="left:1597px;top:196.9px;line-height:15px;font-size:13px;color:#e6e6e6;">14:59:44</div><div class="a" style="left:1706px;top:196.9px;line-height:15px;font-size:13px;color:#ff2d55;">1375.73</div><div class="a" style="right:23px;top:196.9px;line-height:15px;font-size:13px;color:#ff2d55;">0</div><div class="a" style="left:1597px;top:217.3px;line-height:15px;font-size:13px;color:#e6e6e6;">14:59:45</div><div class="a" style="left:1706px;top:217.3px;line-height:15px;font-size:13px;color:#ff2d55;">1375.82</div><div class="a" style="right:23px;top:217.3px;line-height:15px;font-size:13px;color:#ff2d55;">0</div><div class="a" style="left:1597px;top:237.7px;line-height:15px;font-size:13px;color:#e6e6e6;">14:59:45</div><div class="a" style="left:1706px;top:237.7px;line-height:15px;font-size:13px;color:#ff2d55;">1375.70</div><div class="a" style="right:23px;top:237.7px;line-height:15px;font-size:13px;color:#ff2d55;">0</div><div class="a" style="left:1597px;top:258.1px;line-height:15px;font-size:13px;color:#e6e6e6;">14:59:46</div><div class="a" style="left:1706px;top:258.1px;line-height:15px;font-size:13px;color:#ff2d55;">1375.74</div><div class="a" style="right:23px;top:258.1px;line-height:15px;font-size:13px;color:#ff2d55;">0</div><div class="a" style="left:1597px;top:278.5px;line-height:15px;font-size:13px;color:#e6e6e6;">14:59:46</div><div class="a" style="left:1706px;top:278.5px;line-height:15px;font-size:13px;color:#ff2d55;">1375.71</div><div class="a" style="right:23px;top:278.5px;line-height:15px;font-size:13px;color:#ff2d55;">0</div><div class="a" style="left:1597px;top:298.9px;line-height:15px;font-size:13px;color:#e6e6e6;">14:59:47</div><div class="a" style="left:1706px;top:298.9px;line-height:15px;font-size:13px;color:#ff2d55;">1375.70</div><div class="a" style="right:23px;top:298.9px;line-height:15px;font-size:13px;color:#ff2d55;">0</div><div class="a" style="left:1597px;top:319.3px;line-height:15px;font-size:13px;color:#e6e6e6;">14:59:47</div><div class="a" style="left:1706px;top:319.3px;line-height:15px;font-size:13px;color:#ff2d55;">1375.75</div><div class="a" style="right:23px;top:319.3px;line-height:15px;font-size:13px;color:#ff2d55;">0</div><div class="a" style="left:1597px;top:339.7px;line-height:15px;font-size:13px;color:#e6e6e6;">14:59:48</div><div class="a" style="left:1706px;top:339.7px;line-height:15px;font-size:13px;color:#ff2d55;">1375.70</div><div class="a" style="right:23px;top:339.7px;line-height:15px;font-size:13px;color:#ff2d55;">0</div><div class="a" style="left:1597px;top:360.1px;line-height:15px;font-size:13px;color:#e6e6e6;">14:59:48</div><div class="a" style="left:1706px;top:360.1px;line-height:15px;font-size:13px;color:#ff2d55;">1375.82</div><div class="a" style="right:23px;top:360.1px;line-height:15px;font-size:13px;color:#ff2d55;">0</div><div class="a" style="left:1597px;top:380.5px;line-height:15px;font-size:13px;color:#e6e6e6;">14:59:49</div><div class="a" style="left:1706px;top:380.5px;line-height:15px;font-size:13px;color:#ff2d55;">1375.78</div><div class="a" style="right:23px;top:380.5px;line-height:15px;font-size:13px;color:#ff2d55;">0</div><div class="a" style="left:1597px;top:400.9px;line-height:15px;font-size:13px;color:#e6e6e6;">14:59:49</div><div class="a" style="left:1706px;top:400.9px;line-height:15px;font-size:13px;color:#ff2d55;">1375.84</div><div class="a" style="right:23px;top:400.9px;line-height:15px;font-size:13px;color:#ff2d55;">0</div><div class="a" style="left:1597px;top:421.3px;line-height:15px;font-size:13px;color:#e6e6e6;">14:59:50</div><div class="a" style="left:1706px;top:421.3px;line-height:15px;font-size:13px;color:#ff2d55;">1375.76</div><div class="a" style="right:23px;top:421.3px;line-height:15px;font-size:13px;color:#ff2d55;">0</div><div class="a" style="left:1597px;top:441.7px;line-height:15px;font-size:13px;color:#e6e6e6;">14:59:50</div><div class="a" style="left:1706px;top:441.7px;line-height:15px;font-size:13px;color:#ff2d55;">1375.84</div><div class="a" style="right:23px;top:441.7px;line-height:15px;font-size:13px;color:#ff2d55;">0</div><div class="a" style="left:1597px;top:462.1px;line-height:15px;font-size:13px;color:#e6e6e6;">14:59:51</div><div class="a" style="left:1706px;top:462.1px;line-height:15px;font-size:13px;color:#ff2d55;">1375.77</div><div class="a" style="right:23px;top:462.1px;line-height:15px;font-size:13px;color:#ff2d55;">0</div><div class="a" style="left:1597px;top:482.5px;line-height:15px;font-size:13px;color:#e6e6e6;">14:59:51</div><div class="a" style="left:1706px;top:482.5px;line-height:15px;font-size:13px;color:#ff2d55;">1375.86</div><div class="a" style="right:23px;top:482.5px;line-height:15px;font-size:13px;color:#ff2d55;">0</div><div class="a" style="left:1597px;top:502.9px;line-height:15px;font-size:13px;color:#e6e6e6;">14:59:52</div><div class="a" style="left:1706px;top:502.9px;line-height:15px;font-size:13px;color:#ff2d55;">1375.82</div><div class="a" style="right:23px;top:502.9px;line-height:15px;font-size:13px;color:#ff2d55;">0</div><div class="a" style="left:1597px;top:523.3px;line-height:15px;font-size:13px;color:#e6e6e6;">14:59:52</div><div class="a" style="left:1706px;top:523.3px;line-height:15px;font-size:13px;color:#ff2d55;">1375.80</div><div class="a" style="right:23px;top:523.3px;line-height:15px;font-size:13px;color:#ff2d55;">0</div><div class="a" style="left:1597px;top:543.7px;line-height:15px;font-size:13px;color:#e6e6e6;">14:59:53</div><div class="a" style="left:1706px;top:543.7px;line-height:15px;font-size:13px;color:#ff2d55;">1375.78</div><div class="a" style="right:23px;top:543.7px;line-height:15px;font-size:13px;color:#ff2d55;">0</div><div class="a" style="left:1597px;top:564.1px;line-height:15px;font-size:13px;color:#e6e6e6;">14:59:53</div><div class="a" style="left:1706px;top:564.1px;line-height:15px;font-size:13px;color:#ff2d55;">1375.87</div><div class="a" style="right:23px;top:564.1px;line-height:15px;font-size:13px;color:#ff2d55;">0</div><div class="a" style="left:1597px;top:584.5px;line-height:15px;font-size:13px;color:#e6e6e6;">14:59:54</div><div class="a" style="left:1706px;top:584.5px;line-height:15px;font-size:13px;color:#ff2d55;">1375.78</div><div class="a" style="right:23px;top:584.5px;line-height:15px;font-size:13px;color:#ff2d55;">0</div><div class="a" style="left:1597px;top:604.9px;line-height:15px;font-size:13px;color:#e6e6e6;">14:59:54</div><div class="a" style="left:1706px;top:604.9px;line-height:15px;font-size:13px;color:#ff2d55;">1375.73</div><div class="a" style="right:23px;top:604.9px;line-height:15px;font-size:13px;color:#ff2d55;">0</div><div class="a" style="left:1597px;top:625.3px;line-height:15px;font-size:13px;color:#e6e6e6;">14:59:55</div><div class="a" style="left:1706px;top:625.3px;line-height:15px;font-size:13px;color:#ff2d55;">1375.82</div><div class="a" style="right:23px;top:625.3px;line-height:15px;font-size:13px;color:#ff2d55;">0</div><div class="a" style="left:1597px;top:645.7px;line-height:15px;font-size:13px;color:#e6e6e6;">14:59:55</div><div class="a" style="left:1706px;top:645.7px;line-height:15px;font-size:13px;color:#ff2d55;">1375.84</div><div class="a" style="right:23px;top:645.7px;line-height:15px;font-size:13px;color:#ff2d55;">0</div><div class="a" style="left:1597px;top:666.1px;line-height:15px;font-size:13px;color:#e6e6e6;">14:59:56</div><div class="a" style="left:1706px;top:666.1px;line-height:15px;font-size:13px;color:#ff2d55;">1375.83</div><div class="a" style="right:23px;top:666.1px;line-height:15px;font-size:13px;color:#ff2d55;">0</div><div class="a" style="left:1597px;top:686.5px;line-height:15px;font-size:13px;color:#e6e6e6;">14:59:56</div><div class="a" style="left:1706px;top:686.5px;line-height:15px;font-size:13px;color:#ff2d55;">1375.80</div><div class="a" style="right:23px;top:686.5px;line-height:15px;font-size:13px;color:#ff2d55;">0</div><div class="a" style="left:1597px;top:706.9px;line-height:15px;font-size:13px;color:#e6e6e6;">14:59:57</div><div class="a" style="left:1706px;top:706.9px;line-height:15px;font-size:13px;color:#ff2d55;">1375.77</div><div class="a" style="right:23px;top:706.9px;line-height:15px;font-size:13px;color:#ff2d55;">0</div><div class="a" style="left:1597px;top:727.3px;line-height:15px;font-size:13px;color:#e6e6e6;">14:59:57</div><div class="a" style="left:1706px;top:727.3px;line-height:15px;font-size:13px;color:#ff2d55;">1375.75</div><div class="a" style="right:23px;top:727.3px;line-height:15px;font-size:13px;color:#ff2d55;">0</div><div class="a" style="left:1597px;top:747.7px;line-height:15px;font-size:13px;color:#e6e6e6;">14:59:58</div><div class="a" style="left:1706px;top:747.7px;line-height:15px;font-size:13px;color:#ff2d55;">1375.79</div><div class="a" style="right:23px;top:747.7px;line-height:15px;font-size:13px;color:#ff2d55;">0</div><div class="a" style="left:1597px;top:768.1px;line-height:15px;font-size:13px;color:#e6e6e6;">14:59:58</div><div class="a" style="left:1706px;top:768.1px;line-height:15px;font-size:13px;color:#ff2d55;">1375.61</div><div class="a" style="right:23px;top:768.1px;line-height:15px;font-size:13px;color:#ff2d55;">0</div><div class="a" style="left:1597px;top:788.5px;line-height:15px;font-size:13px;color:#e6e6e6;">14:59:59</div><div class="a" style="left:1706px;top:788.5px;line-height:15px;font-size:13px;color:#ff2d55;">1375.66</div><div class="a" style="right:23px;top:788.5px;line-height:15px;font-size:13px;color:#ff2d55;">0</div><div class="a" style="left:1597px;top:808.9px;line-height:15px;font-size:13px;color:#e6e6e6;">14:59:59</div><div class="a" style="left:1706px;top:808.9px;line-height:15px;font-size:13px;color:#ff2d55;">1375.56</div><div class="a" style="right:23px;top:808.9px;line-height:15px;font-size:13px;color:#ff2d55;">0</div><div class="a" style="left:1597px;top:829.3px;line-height:15px;font-size:13px;color:#e6e6e6;">15:00:00</div><div class="a" style="left:1706px;top:829.3px;line-height:15px;font-size:13px;color:#ff2d55;">1375.69</div><div class="a" style="right:23px;top:829.3px;line-height:15px;font-size:13px;color:#ff2d55;">0</div><div class="a" style="left:1597px;top:849.7px;line-height:15px;font-size:13px;color:#e6e6e6;">15:00:00</div><div class="a" style="left:1706px;top:849.7px;line-height:15px;font-size:13px;color:#ff2d55;">1375.61</div><div class="a" style="right:23px;top:849.7px;line-height:15px;font-size:13px;color:#ff2d55;">0</div><div class="a" style="left:1597px;top:870.1px;line-height:15px;font-size:13px;color:#e6e6e6;">15:00:01</div><div class="a" style="left:1706px;top:870.1px;line-height:15px;font-size:13px;color:#ff2d55;">1375.63</div><div class="a" style="right:23px;top:870.1px;line-height:15px;font-size:13px;color:#ff2d55;">0</div><div class="a" style="left:1597px;top:890.5px;line-height:15px;font-size:13px;color:#e6e6e6;">15:00:01</div><div class="a" style="left:1706px;top:890.5px;line-height:15px;font-size:13px;color:#ff2d55;">1375.68</div><div class="a" style="right:23px;top:890.5px;line-height:15px;font-size:13px;color:#ff2d55;">0</div><svg class="a" style="left:0;top:0" width="1870" height="936"><path fill="#ff2d55" d="M1672.7 33L1678.6 38.8H1675V45H1670.5V38.8H1666.8ZM1854.2 177.0L1861 183.5H1856.5V191.0H1851.7V183.5H1847.5ZM1854.2 197.4L1861 203.9H1856.5V211.4H1851.7V203.9H1847.5ZM1854.2 217.8L1861 224.3H1856.5V231.8H1851.7V224.3H1847.5ZM1854.2 238.2L1861 244.7H1856.5V252.2H1851.7V244.7H1847.5ZM1854.2 258.6L1861 265.1H1856.5V272.6H1851.7V265.1H1847.5ZM1854.2 279.0L1861 285.5H1856.5V293.0H1851.7V285.5H1847.5ZM1854.2 299.4L1861 305.9H1856.5V313.4H1851.7V305.9H1847.5ZM1854.2 319.8L1861 326.3H1856.5V333.8H1851.7V326.3H1847.5ZM1854.2 340.2L1861 346.7H1856.5V354.2H1851.7V346.7H1847.5ZM1854.2 360.6L1861 367.1H1856.5V374.6H1851.7V367.1H1847.5ZM1854.2 381.0L1861 387.5H1856.5V395.0H1851.7V387.5H1847.5ZM1854.2 401.4L1861 407.9H1856.5V415.4H1851.7V407.9H1847.5ZM1854.2 421.8L1861 428.3H1856.5V435.8H1851.7V428.3H1847.5ZM1854.2 442.2L1861 448.7H1856.5V456.2H1851.7V448.7H1847.5ZM1854.2 462.6L1861 469.1H1856.5V476.6H1851.7V469.1H1847.5ZM1854.2 483.0L1861 489.5H1856.5V497.0H1851.7V489.5H1847.5ZM1854.2 503.4L1861 509.9H1856.5V517.4H1851.7V509.9H1847.5ZM1854.2 523.8L1861 530.3H1856.5V537.8H1851.7V530.3H1847.5ZM1854.2 544.2L1861 550.7H1856.5V558.2H1851.7V550.7H1847.5ZM1854.2 564.6L1861 571.1H1856.5V578.6H1851.7V571.1H1847.5ZM1854.2 585.0L1861 591.5H1856.5V599.0H1851.7V591.5H1847.5ZM1854.2 605.4L1861 611.9H1856.5V619.4H1851.7V611.9H1847.5ZM1854.2 625.8L1861 632.3H1856.5V639.8H1851.7V632.3H1847.5ZM1854.2 646.2L1861 652.7H1856.5V660.2H1851.7V652.7H1847.5ZM1854.2 666.6L1861 673.1H1856.5V680.6H1851.7V673.1H1847.5ZM1854.2 687.0L1861 693.5H1856.5V701.0H1851.7V693.5H1847.5ZM1854.2 707.4L1861 713.9H1856.5V721.4H1851.7V713.9H1847.5ZM1854.2 727.8L1861 734.3H1856.5V741.8H1851.7V734.3H1847.5ZM1854.2 748.2L1861 754.7H1856.5V762.2H1851.7V754.7H1847.5ZM1854.2 768.6L1861 775.1H1856.5V782.6H1851.7V775.1H1847.5ZM1854.2 789.0L1861 795.5H1856.5V803.0H1851.7V795.5H1847.5ZM1854.2 809.4L1861 815.9H1856.5V823.4H1851.7V815.9H1847.5ZM1854.2 829.8L1861 836.3H1856.5V843.8H1851.7V836.3H1847.5ZM1854.2 850.2L1861 856.7H1856.5V864.2H1851.7V856.7H1847.5ZM1854.2 870.6L1861 877.1H1856.5V884.6H1851.7V877.1H1847.5ZM1854.2 891.0L1861 897.5H1856.5V905.0H1851.7V897.5H1847.5Z"/></svg><div class="a" style="left:1589px;top:909px;width:281px;height:24px;background:#13233d;"></div><div class="a" style="left:1589px;top:909px;width:56px;height:24px;background:#048bd0;"></div><div class="a" style="left:1517px;width:200px;text-align:center;top:913.5px;line-height:15px;font-size:13px;color:#e6e6e6;">盘口</div>
</body></html>
